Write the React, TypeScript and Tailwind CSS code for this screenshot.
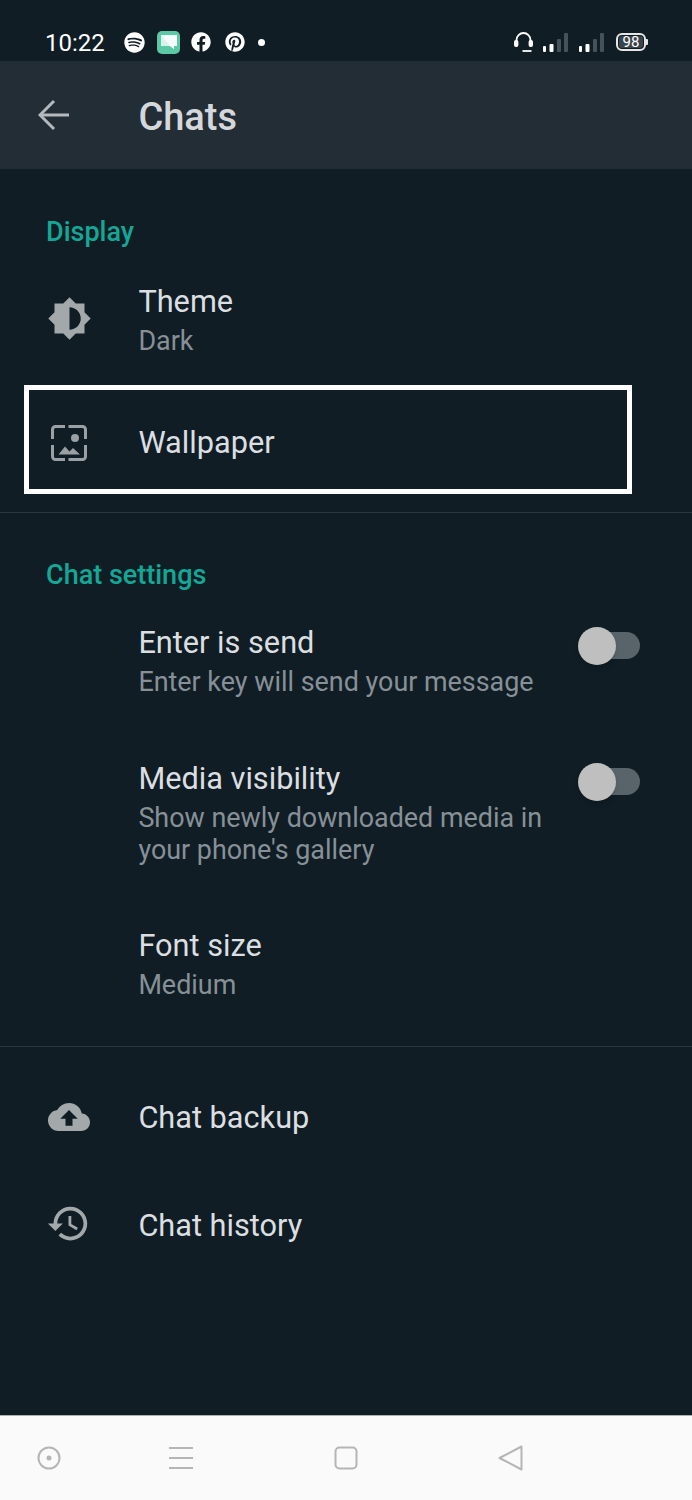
import React from "react";
import { FaSpotify, FaFacebook, FaPinterest } from "react-icons/fa";

const Gray = "#a3a8ab";

function BrightnessIcon() {
  return (
    <svg width="45" height="45" viewBox="0 0 24 24" fill={Gray}>
      <path fillRule="evenodd" d="M20 15.31L23.31 12 20 8.69V4h-4.69L12 .69 8.69 4H4v4.69L.69 12 4 15.31V20h4.69L12 23.31 15.31 20H20v-4.69zM12 18V6c3.31 0 6 2.69 6 6s-2.69 6-6 6z" />
    </svg>
  );
}

function WallpaperIcon() {
  return (
    <svg width="36" height="36" viewBox="0 0 36 36" fill="none">
      <g stroke="#9aa0a4" strokeWidth="3">
        <path d="M14 1.5H4.5a3 3 0 0 0-3 3V14" />
        <path d="M17.5 1.5h14a3 3 0 0 1 3 3V14" />
        <path d="M14 34.5H4.5a3 3 0 0 1-3-3V20" />
        <path d="M17.5 34.5h14a3 3 0 0 0 3-3V20" />
      </g>
      <circle cx="24" cy="13" r="4" fill="#9aa0a4" />
      <path d="M7.5 29.5l6.5-8 4.5 5 3.5-3.5 7 6.5z" fill="#9aa0a4" />
    </svg>
  );
}

function CloudIcon() {
  return (
    <svg width="42" height="42" viewBox="0 0 24 24" fill={Gray}>
      <path d="M19.35 10.04C18.67 6.59 15.64 4 12 4 9.11 4 6.6 5.64 5.35 8.04 2.34 8.36 0 10.91 0 14c0 3.31 2.69 6 6 6h13c2.76 0 5-2.24 5-5 0-2.64-2.05-4.78-4.65-4.96zM14 13v4h-4v-4H7l5-5 5 5h-3z" />
    </svg>
  );
}

function HistoryIcon() {
  return (
    <svg width="45" height="45" viewBox="0 0 24 24" fill={Gray}>
      <path d="M13 3c-4.97 0-9 4.03-9 9H1l3.89 3.89.07.14L9 12H6c0-3.87 3.13-7 7-7s7 3.13 7 7-3.13 7-7 7c-1.93 0-3.68-.79-4.94-2.06l-1.42 1.42C8.27 19.99 10.51 21 13 21c4.97 0 9-4.03 9-9s-4.03-9-9-9zm-1 5v5l4.28 2.54.72-1.21-3.5-2.08V8H12z" />
    </svg>
  );
}

function BackArrow() {
  return (
    <svg width="32" height="32" viewBox="0 0 32 32" fill="none" stroke="#b4b9bd" strokeWidth="3">
      <path d="M31 16H3" />
      <path d="M16 2L2 16l14 14" />
    </svg>
  );
}

function MessageIcon() {
  return (
    <div className="w-[23px] h-[23px] rounded-[5px] bg-[#5cc8a6] flex items-center justify-center">
      <svg width="16" height="15" viewBox="0 0 16 15">
        <path d="M0 0h16v11h-3v3l-4-3H0z" fill="#d9f3ea" />
        <path d="M0 0h16v11h-3v3l-4-3z" fill="#f5fcfa" />
      </svg>
    </div>
  );
}

function Headset() {
  return (
    <svg width="19" height="20" viewBox="0 0 19 20" fill="none" stroke="#fff" strokeWidth="1.8">
      <path d="M2.5 11V8a7 7 0 0 1 14 0v3" />
      <rect x="0.9" y="8.9" width="2.6" height="5.2" rx="1" fill="#fff" />
      <rect x="15.5" y="8.9" width="2.6" height="5.2" rx="1" fill="#fff" />
      <path d="M8.5 19h9" />
    </svg>
  );
}

function Signal() {
  return (
    <svg width="25" height="20" viewBox="0 0 25 20">
      <rect x="0" y="14" width="3" height="6" rx="1" fill="#ffffff" />
      <rect x="6.5" y="12" width="4" height="8" rx="1" fill="#ffffff" />
      <rect x="14" y="7" width="4" height="13" rx="1" fill="#46525a" />
      <rect x="21" y="1" width="4" height="19" rx="1" fill="#46525a" />
    </svg>
  );
}

function Battery() {
  return (
    <div className="flex items-center">
      <div className="w-[30px] h-[18px] rounded-[6px] border-2 border-[#e4e6e7] p-[1px] flex">
        <div className="flex-1 rounded-[3px] bg-[#3a444b] flex items-center justify-center text-[15px] leading-none text-white font-['Roboto',sans-serif]">
          98
        </div>
      </div>
      <div className="w-[2px] h-[6px] bg-[#e4e6e7] rounded-r-[1px]" />
    </div>
  );
}

function StatusBar() {
  return (
    <div className="h-[61px] bg-[#101d25] flex items-center pt-[23px] pl-[45px] text-white">
      <span className="mt-[2px] text-[24px] leading-[34px] w-[60px] whitespace-nowrap">10:22</span>
      <FaSpotify className="ml-[19px] text-white" size={21} />
      <div className="ml-[12px]"><MessageIcon /></div>
      <FaFacebook className="ml-[11px] text-white" size={20} />
      <FaPinterest className="ml-[14px] text-white" size={20} />
      <div className="ml-[13px] w-[7px] h-[7px] rounded-full bg-white" />
      <div className="ml-[249px]"><Headset /></div>
      <div className="ml-[10px]"><Signal /></div>
      <div className="ml-[11px]"><Signal /></div>
      <div className="ml-[12px]"><Battery /></div>
    </div>
  );
}

function Header() {
  return (
    <div className="h-[108px] bg-[#232d36] flex items-center">
      <div className="w-[138.4px] pl-[38px]"><BackArrow /></div>
      <span className="pt-[4px] text-[38px] leading-[44px] font-medium text-[#d5d8db]">Chats</span>
    </div>
  );
}

function SectionLabel({ children, className }: { children: string; className: string }) {
  return <div className={`pl-[46px] text-[27px] leading-[34px] font-medium text-[#14a795] ${className}`}>{children}</div>;
}

function Title({ children }: { children: string }) {
  return <div className="text-[30.7px] leading-[36px] text-[#dcdfe1] whitespace-nowrap">{children}</div>;
}

function Sub({ children }: { children: React.ReactNode }) {
  return <div className="mt-[5px] text-[26.9px] leading-[32px] text-[#879096]">{children}</div>;
}

function IconSlot({ children, className = "" }: { children?: React.ReactNode; className?: string }) {
  return <div className={`w-[138.4px] shrink-0 flex justify-center ${className}`}>{children}</div>;
}

function Toggle() {
  return (
    <div className="relative w-[62px] h-[27px] ml-auto mr-[52px] mt-[7px] shrink-0">
      <div className="absolute left-[20px] top-0 w-[42px] h-[27px] rounded-full bg-[#59636a]" />
      <div className="absolute left-0 top-[-5px] w-[38px] h-[38px] rounded-full bg-[#bfbfbf] shadow-md" />
    </div>
  );
}

function Nav() {
  return (
    <div className="mt-auto h-[85px] bg-[#fafafa] border-t border-[#aab0b2] flex items-center pl-[37px] pb-[1px]">
      <svg width="24" height="24" viewBox="0 0 24 24" fill="none" stroke="#b5b5b5" strokeWidth="2">
        <circle cx="12" cy="12" r="10.5" />
        <circle cx="12" cy="12" r="2.5" fill="#b5b5b5" stroke="none" />
      </svg>
      <svg className="ml-[108px]" width="24" height="24" viewBox="0 0 24 24" fill="none" stroke="#b5b5b5" strokeWidth="2">
        <path d="M0 2h24M0 12h24M0 22h24" />
      </svg>
      <svg className="ml-[141px]" width="24" height="24" viewBox="0 0 24 24" fill="none" stroke="#b5b5b5" strokeWidth="2">
        <rect x="1.5" y="1.5" width="21" height="21" rx="4" />
      </svg>
      <svg className="ml-[140px]" width="25" height="26" viewBox="0 0 25 26" fill="none" stroke="#b5b5b5" strokeWidth="2" strokeLinejoin="round">
        <path d="M23.5 1.5v23L1.5 13z" />
      </svg>
    </div>
  );
}

export default function App() {
  return (
    <div className="relative w-[692px] h-[1500px] bg-[#101d25] flex flex-col font-['Roboto',sans-serif] overflow-hidden">
      <StatusBar />
      <Header />

      <SectionLabel className="mt-[46px]">Display</SectionLabel>

      <div className="mt-[35px] flex items-center">
        <IconSlot className="pb-[5px]"><BrightnessIcon /></IconSlot>
        <div>
          <Title>Theme</Title>
          <Sub>Dark</Sub>
        </div>
      </div>

      <div className="mt-[28px] h-[109px] ml-[24px] w-[608px] border-[5px] border-white pt-[6px] flex items-center">
        <div className="w-[109.4px] shrink-0 pl-[22px]"><WallpaperIcon /></div>
        <Title>Wallpaper</Title>
      </div>

      <div className="mt-[18px] h-px bg-[#2b363d]" />

      <SectionLabel className="mt-[45px]">Chat settings</SectionLabel>

      <div className="mt-[33px] flex items-start">
        <IconSlot />
        <div>
          <Title>Enter is send</Title>
          <Sub>Enter key will send your message</Sub>
        </div>
        <Toggle />
      </div>

      <div className="mt-[63px] flex items-start">
        <IconSlot />
        <div>
          <Title>Media visibility</Title>
          <Sub>Show newly downloaded media in<br />your phone's gallery</Sub>
        </div>
        <Toggle />
      </div>

      <div className="mt-[62px] flex items-center">
        <IconSlot />
        <div>
          <Title>Font size</Title>
          <Sub>Medium</Sub>
        </div>
      </div>

      <div className="mt-[45px] h-px bg-[#2b363d]" />

      <div className="mt-[50px] h-[42px] flex items-center">
        <IconSlot className="pb-[3px]"><CloudIcon /></IconSlot>
        <Title>Chat backup</Title>
      </div>

      <div className="mt-[66px] h-[42px] flex items-center">
        <IconSlot className="pb-[5px] pr-[2px]"><HistoryIcon /></IconSlot>
        <Title>Chat history</Title>
      </div>

      <Nav />
    </div>
  );
}
